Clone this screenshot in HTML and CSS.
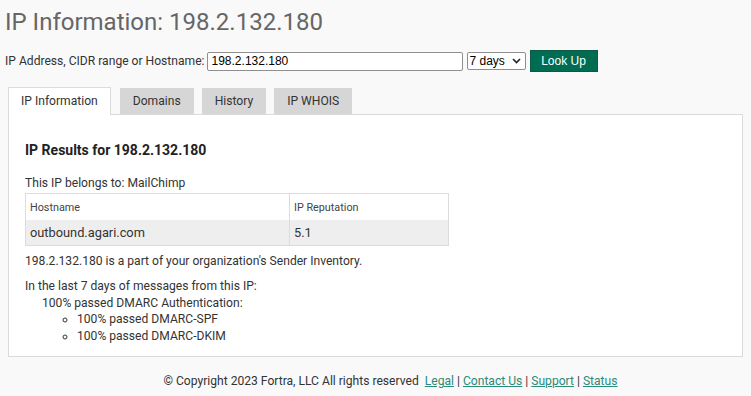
FILE: index.html
```html
<!DOCTYPE html>
<html>
<head>
<meta charset="utf-8">
<link rel="stylesheet" href="styles.css">
</head>
<body>
<div class="page">
  <h1 class="title">IP Information: 198.2.132.180</h1>
  <form class="lookup">
    <label class="lookup-label">IP Address, CIDR range or Hostname:</label>
    <input class="lookup-input" type="text" value="198.2.132.180">
    <span class="select-wrap">
      <select class="lookup-select"><option>7 days</option></select>
      <svg class="chev" width="9" height="6" viewBox="0 0 9 6"><path d="M1 1 L4.5 4.5 L8 1" fill="none" stroke="#222" stroke-width="1.6"/></svg>
    </span>
    <button class="lookup-btn" type="button">Look Up</button>
  </form>
  <div class="tabs">
    <div class="tab active">IP Information</div>
    <div class="tab">Domains</div>
    <div class="tab">History</div>
    <div class="tab">IP WHOIS</div>
  </div>
  <div class="panel">
    <h2 class="results">IP Results for 198.2.132.180</h2>
    <p class="belongs">This IP belongs to: MailChimp</p>
    <table class="info">
      <tr class="head"><th class="c1">Hostname</th><th>IP Reputation</th></tr>
      <tr class="row"><td class="c1">outbound.agari.com</td><td>5.1</td></tr>
    </table>
    <p class="inventory">198.2.132.180 is a part of your organization's Sender Inventory.</p>
    <div class="stats">
      <div>In the last 7 days of messages from this IP:</div>
      <div class="indent">100% passed DMARC Authentication:
        <ul class="sub">
          <li>100% passed DMARC-SPF</li>
          <li>100% passed DMARC-DKIM</li>
        </ul>
      </div>
    </div>
  </div>
  <footer class="footer">© Copyright 2023 Fortra, LLC All rights reserved &nbsp;<a href="#">Legal</a> | <a href="#">Contact Us</a> | <a href="#">Support</a> | <a href="#">Status</a></footer>
</div>
</body>
</html>
```
FILE: styles.css
```css
html, body { margin: 0; padding: 0; }
body {
  background: #f9f9f9;
  font-family: Roboto, "Liberation Sans", Arial, sans-serif;
  color: #333;
  width: 751px;
  height: 396px;
  overflow: hidden;
}
.page { padding: 0 8px 0 5px; }
.title {
  margin: 0;
  padding-top: 7px;
  font-size: 24px;
  font-weight: 400;
  color: #666;
  line-height: 30px;
  height: 30px;
}
.lookup {
  display: flex;
  align-items: center;
  margin-top: 13px;
  height: 22px;
}
.lookup-label { font-size: 12.1px; color: #333; margin-right: 2px; }
.lookup-input {
  width: 256px;
  height: 19px;
  box-sizing: border-box;
  border: 1px solid #8f8f8f;
  border-radius: 2px;
  padding: 0 4px;
  font-family: "Liberation Sans", Arial, sans-serif;
  font-size: 12px;
  color: #000;
  margin: 0 4px 0 0;
}
.select-wrap {
  position: relative;
  display: inline-block;
  width: 59px;
  height: 18px;
  margin-right: 4px;
}
.lookup-select {
  -webkit-appearance: none;
  appearance: none;
  width: 59px;
  height: 18px;
  box-sizing: border-box;
  font-family: "Liberation Sans", Arial, sans-serif;
  font-size: 12px;
  border: 1px solid #8f8f8f;
  border-radius: 2px;
  background: #fff;
  color: #000;
  margin: 0;
  padding: 0 0 0 2px;
  display: block;
}
.chev { position: absolute; right: 5px; top: 6px; }
.lookup-btn {
  width: 68px;
  height: 22px;
  background: #006c52;
  border: 1px solid #0a5a45;
  color: #fff;
  font-family: "Liberation Sans", Arial, sans-serif;
  font-size: 12px;
  padding: 0;
}
.tabs {
  display: flex;
  gap: 8px;
  margin: 15px 0 0 3px;
  height: 27px;
  align-items: flex-end;
}
.tab {
  height: 26px;
  box-sizing: border-box;
  padding: 0 13px;
  background: #d6d6d6;
  font-size: 12.1px;
  line-height: 26px;
  color: #333;
}
.tab.active {
  height: 28px;
  margin-bottom: -1px;
  background: #fff;
  border: 1px solid #dcdcdc;
  border-bottom: none;
  padding: 0 12px;
  line-height: 27px;
  margin-right: 1px;
  position: relative;
  z-index: 1;
}
.panel {
  margin-left: 3px;
  background: #fff;
  border: 1px solid #dadada;
  height: 243px;
  box-sizing: border-box;
  padding: 0 16px;
}
.results {
  margin: 27px 0 0;
  font-size: 14px;
  font-weight: 700;
  line-height: 17px;
  color: #222;
}
.belongs {
  margin: 16px 0 0;
  font-size: 12.1px;
  line-height: 16px;
}
.info {
  margin-top: 2px;
  width: 424px;
  border-collapse: collapse;
  border: 1px solid #dcdcdc;
}
.info th, .info td { text-align: left; padding: 0 4px; }
.info th {
  font-size: 10.8px;
  font-weight: 400;
  height: 26px;
  color: #444;
}
.info td {
  font-size: 12.8px;
  height: 25px;
  background: #eee;
}
.info .c1 { width: 255px; border-right: 1px solid #dcdcdc; }
.inventory {
  margin: 7px 0 0;
  font-size: 12.1px;
  line-height: 16px;
}
.stats {
  margin-top: 9px;
  font-size: 12.1px;
  line-height: 16.7px;
}
.indent { padding-left: 17px; }
.sub {
  margin: 0;
  padding-left: 35px;
  list-style: circle;
}
.footer {
  text-align: center;
  font-size: 12.1px;
  margin-top: 17px;
  color: #333;
  padding-left: 33px;
}
.footer a { color: #2b8a78; }
```
